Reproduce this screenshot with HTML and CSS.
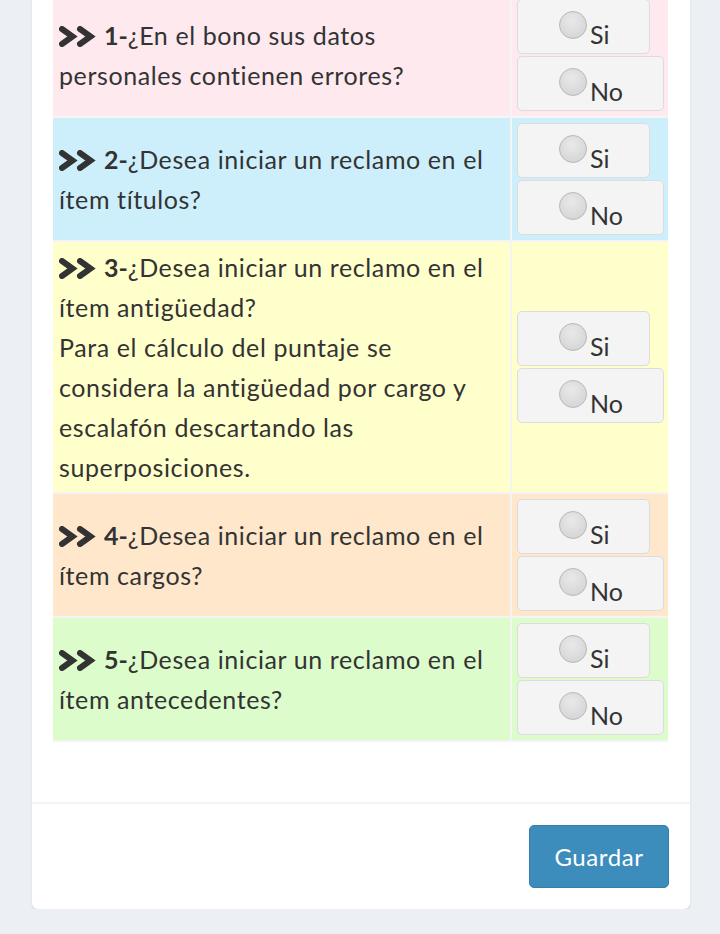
FILE: index.html
```html
<!DOCTYPE html>
<html lang="es">
<head>
<meta charset="utf-8">
<title>Reclamos</title>
<link rel="stylesheet" href="styles.css">
</head>
<body>
<div class="page">
  <div class="card">
    <div class="card-body">
      <table class="questions">
        <tr class="row-pink">
          <td class="q"><svg class="chev" viewBox="0 0 38 20" aria-hidden="true"><polyline points="3,2.5 13.5,10 3,17.5"/><polyline points="21,2.5 31.5,10 21,17.5"/></svg> <b>1-</b>¿En el bono sus datos<br>personales contienen errores?</td>
          <td class="a">
            <div class="opts">
              <label class="opt"><input type="radio" name="p1"><span>Si</span></label>
              <label class="opt"><input type="radio" name="p1"><span>No</span></label>
            </div>
          </td>
        </tr>
        <tr class="row-blue">
          <td class="q"><svg class="chev" viewBox="0 0 38 20" aria-hidden="true"><polyline points="3,2.5 13.5,10 3,17.5"/><polyline points="21,2.5 31.5,10 21,17.5"/></svg> <b>2-</b>¿Desea iniciar un reclamo en el<br>ítem títulos?</td>
          <td class="a">
            <div class="opts">
              <label class="opt"><input type="radio" name="p2"><span>Si</span></label>
              <label class="opt"><input type="radio" name="p2"><span>No</span></label>
            </div>
          </td>
        </tr>
        <tr class="row-yellow">
          <td class="q"><svg class="chev" viewBox="0 0 38 20" aria-hidden="true"><polyline points="3,2.5 13.5,10 3,17.5"/><polyline points="21,2.5 31.5,10 21,17.5"/></svg> <b>3-</b>¿Desea iniciar un reclamo en el<br>ítem antigüedad?<br>Para el cálculo del puntaje se<br>considera la antigüedad por cargo y<br>escalafón descartando las<br>superposiciones.</td>
          <td class="a">
            <div class="opts">
              <label class="opt"><input type="radio" name="p3"><span>Si</span></label>
              <label class="opt"><input type="radio" name="p3"><span>No</span></label>
            </div>
          </td>
        </tr>
        <tr class="row-orange">
          <td class="q"><svg class="chev" viewBox="0 0 38 20" aria-hidden="true"><polyline points="3,2.5 13.5,10 3,17.5"/><polyline points="21,2.5 31.5,10 21,17.5"/></svg> <b>4-</b>¿Desea iniciar un reclamo en el<br>ítem cargos?</td>
          <td class="a">
            <div class="opts">
              <label class="opt"><input type="radio" name="p4"><span>Si</span></label>
              <label class="opt"><input type="radio" name="p4"><span>No</span></label>
            </div>
          </td>
        </tr>
        <tr class="row-green">
          <td class="q"><svg class="chev" viewBox="0 0 38 20" aria-hidden="true"><polyline points="3,2.5 13.5,10 3,17.5"/><polyline points="21,2.5 31.5,10 21,17.5"/></svg> <b>5-</b>¿Desea iniciar un reclamo en el<br>ítem antecedentes?</td>
          <td class="a">
            <div class="opts">
              <label class="opt"><input type="radio" name="p5"><span>Si</span></label>
              <label class="opt"><input type="radio" name="p5"><span>No</span></label>
            </div>
          </td>
        </tr>
      </table>
    </div>
    <div class="card-footer">
      <button class="btn-save" type="button">Guardar</button>
    </div>
  </div>
</div>
</body>
</html>
```
FILE: styles.css
```css
html, body {
  margin: 0;
  padding: 0;
  background: #ecf0f5;
}
body {
  font-family: "Lato", "Liberation Sans", sans-serif;
  color: #333;
  font-size: 24px;
  font-variant-ligatures: none;
}
.page {
  padding: 0 30px 0 32px;
}
.card {
  width: 658px;
  background: #fff;
  border-radius: 0 0 6px 6px;
  box-shadow: 0 2px 2px rgba(0, 0, 0, 0.1);
  margin-top: -6px;
}
.card-body {
  padding: 0 22px 60px 21px;
}
.questions {
  width: 615px;
  border-collapse: collapse;
  table-layout: fixed;
}
.questions td {
  border: 2px solid #f4f4f4;
  padding: 5px 5px;
}
.questions tr:first-child td { border-top: 0; }
.questions td:first-child { border-left: 0; }
.questions td:last-child { border-right: 0; }
.questions td.q {
  width: 446px;
  font-size: 25px;
  letter-spacing: 0.6px;
  line-height: 40px;
  padding-left: 6px;
  vertical-align: middle;
}
.questions td.a {
  vertical-align: middle;
}
.row-pink td { background: #fde9ee; }
.row-blue td { background: #cdeffc; }
.row-yellow td { background: #ffffcc; }
.row-orange td { background: #fee7cb; }
.row-green td { background: #dcfccb; }

.chev {
  width: 38px;
  height: 21px;
  vertical-align: -2px;
  fill: none;
  stroke: #333;
  stroke-width: 6;
  stroke-linecap: round;
  stroke-linejoin: miter;
}
.q b {
  font-weight: 700;
  letter-spacing: 0;
}
.opts {
  display: flex;
  flex-direction: column;
  align-items: flex-start;
  gap: 2px;
}
.opt {
  display: flex;
  align-items: flex-start;
  box-sizing: border-box;
  height: 55px;
  padding: 11px 40px 0 41px;
  background: #f4f4f4;
  border: 1px solid #dcdcdc;
  border-radius: 5px;
  font-size: 25px;
}
.opt input {
  appearance: none;
  -webkit-appearance: none;
  margin: 0 3px 0 0;
  width: 28px;
  height: 28px;
  border-radius: 50%;
  border: 1px solid #b9b9b9;
  background: radial-gradient(circle at 45% 35%, #e9e9e9 0%, #dadada 60%, #cfcfcf 100%);
  box-sizing: border-box;
}
.opt span {
  margin-top: 9px;
  line-height: 28px;
}
.card-footer {
  border-top: 2px solid #f4f4f4;
  padding: 21px 21px 21px 21px;
  display: flex;
  justify-content: flex-end;
}
.btn-save {
  font-family: "Lato", "Liberation Sans", sans-serif;
  font-size: 24px;
  letter-spacing: 0.6px;
  color: #fff;
  background: #3c8dbc;
  border: 1px solid #367fa9;
  border-radius: 5px;
  width: 140px;
  height: 63px;
  padding: 0;
}
```
